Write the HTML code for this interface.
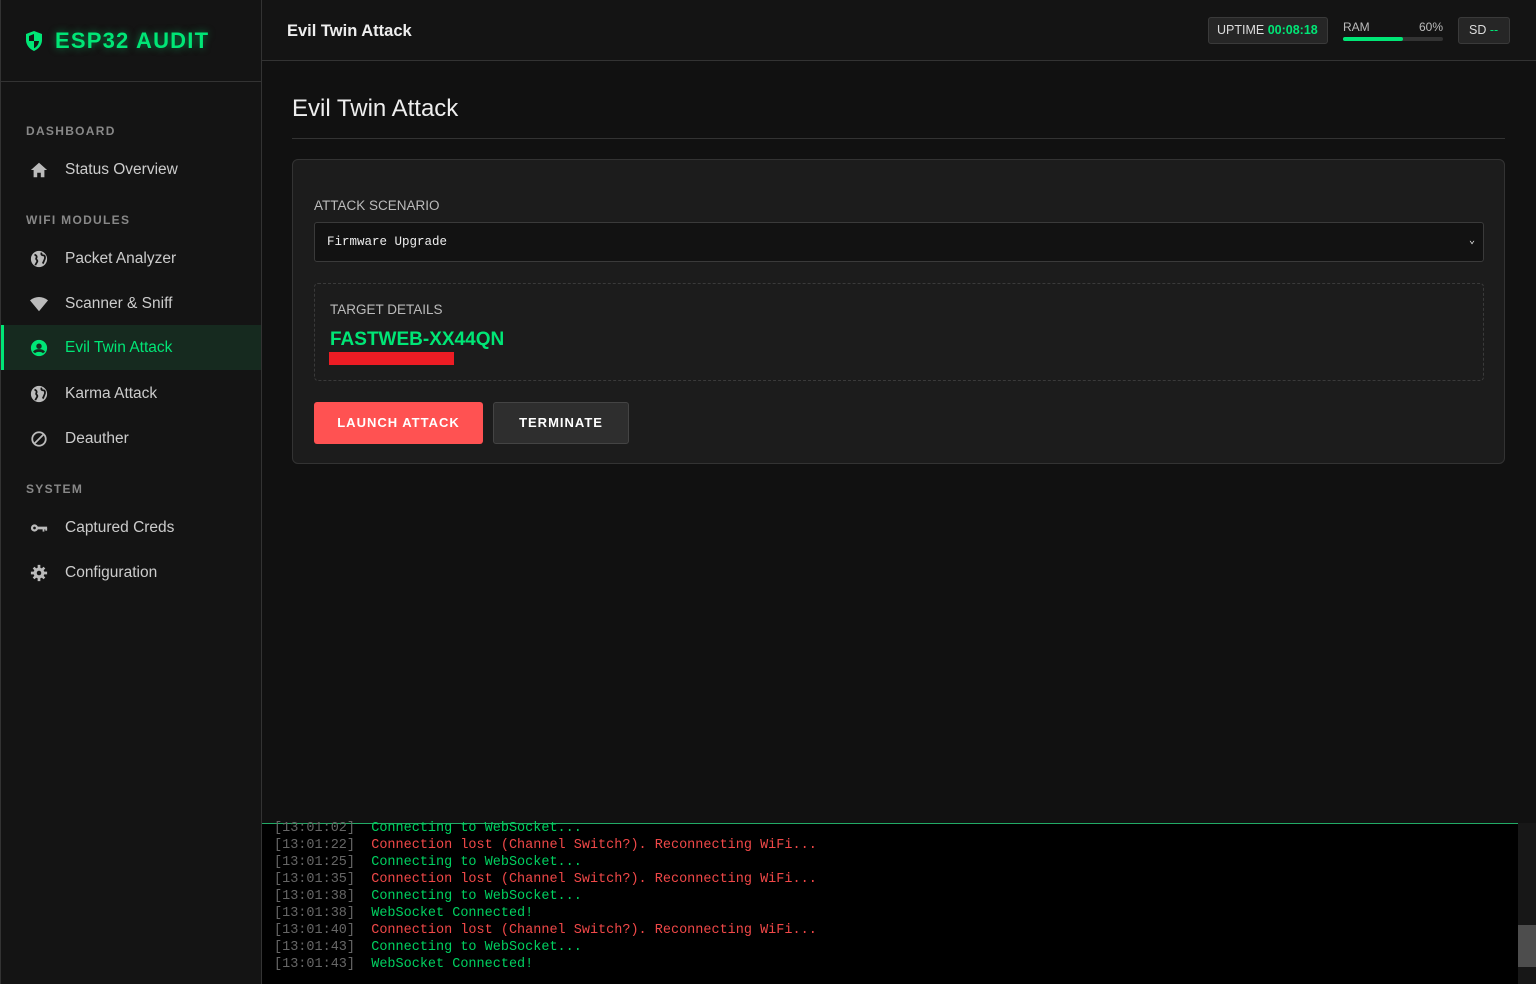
<!DOCTYPE html>
<html><head><style>
*{box-sizing:border-box;margin:0;padding:0}
body{width:1536px;height:984px;background:#111;font-family:"Liberation Sans",sans-serif;color:#ddd;position:relative;overflow:hidden}
.sb{position:absolute;left:0;top:0;width:262px;height:984px;background:#141414;border-right:1px solid #333;border-left:1px solid #333}
.logo{height:82px;border-bottom:1px solid #333;display:flex;align-items:center;padding-left:23px;color:#00e676;font-weight:bold;font-size:22px;letter-spacing:1.2px;text-shadow:0 0 8px rgba(0,230,118,.5)}
.logo svg{margin-right:11px}
.sec{position:absolute;font-size:12px;font-weight:bold;letter-spacing:1.3px;color:#888;left:25px;height:14px}
.it{position:absolute;left:0;width:260px;height:45px;display:flex;align-items:center;padding-left:29px;font-size:15.5px;color:#ccc}
.it svg{width:18px;height:18px;margin-right:17px;fill:#bbb}
.it.a{background:#162a1f;color:#00e676;border-left:3px solid #00e676;padding-left:26px}
.it.a svg{fill:#00e676}
.hd{position:absolute;left:262px;top:0;right:0;height:61px;border-bottom:1px solid #333;background:#141414}
.hd h1{position:absolute;left:25px;top:22px;font-size:16.5px;font-weight:bold;color:#eee}
.badge{position:absolute;top:17px;height:27px;background:#262626;border:1px solid #3a3a3a;border-radius:3px;font-size:12.5px;color:#ddd;line-height:25px;padding:0 10px;white-space:nowrap}
.g{color:#00e676;font-weight:bold}
.card{position:absolute;left:292px;top:159px;width:1213px;height:305px;background:#1c1c1c;border:1px solid #333;border-radius:6px}
.lbl{font-size:13.5px;color:#bbb}
.con{position:absolute;left:262px;top:823px;width:1256px;height:161px;background:#000;border-top:1px solid #2a6;font-family:"Liberation Mono",monospace;font-size:13.5px;line-height:17px;padding-left:12px}
.con div{white-space:pre}
.t{color:#666}.gr{color:#00d060}.rd{color:#f04848}
</style></head><body>
<div class="sb">
<div class="logo"><svg width="20" height="22" viewBox="0 0 20 22"><path d="M10 1L2 4v6c0 5 3.5 9 8 11 4.5-2 8-6 8-11V4z" fill="#00e676"/><path d="M10 4v7H5V6zM10 11h5c-.3 3.5-2.5 6-5 7.3z" fill="#141414"/></svg>ESP32 AUDIT</div>
<div class="sec" style="top:124px">DASHBOARD</div>
<div class="it" style="top:147px"><svg viewBox="0 0 20 20"><path d="M10 2L1 10h3v8h4v-5h4v5h4v-8h3z"/></svg>Status Overview</div>
<div class="sec" style="top:213px">WIFI MODULES</div>
<div class="it" style="top:236px"><svg viewBox="0 0 20 20"><circle cx="10" cy="10" r="9"/><path d="M5 5c2 1 3 2 2 4s2 2 1 4-2 3-2 4M13 3c-1 2 0 3 2 3s2 3 1 5-1 3-2 4" stroke="#141414" stroke-width="2" fill="none"/></svg>Packet Analyzer</div>
<div class="it" style="top:281px"><svg viewBox="0 0 20 20"><path d="M0 6c6-5 14-5 20 0l-10 12z"/></svg>Scanner &amp; Sniff</div>
<div class="it a" style="top:325px"><svg viewBox="0 0 20 20"><circle cx="10" cy="10" r="9"/><circle cx="10" cy="8" r="3" fill="#162a1f"/><path d="M4.5 15c2-3 9-3 11 0" stroke="#162a1f" stroke-width="3" fill="none"/></svg>Evil Twin Attack</div>
<div class="it" style="top:371px"><svg viewBox="0 0 20 20"><circle cx="10" cy="10" r="9"/><path d="M5 5c2 1 3 2 2 4s2 2 1 4-2 3-2 4M13 3c-1 2 0 3 2 3s2 3 1 5-1 3-2 4" stroke="#141414" stroke-width="2" fill="none"/></svg>Karma Attack</div>
<div class="it" style="top:416px"><svg viewBox="0 0 20 20"><circle cx="10" cy="10" r="7.5" fill="none" stroke="#bbb" stroke-width="2"/><path d="M5 15L15 5" stroke="#bbb" stroke-width="2"/></svg>Deauther</div>
<div class="sec" style="top:482px">SYSTEM</div>
<div class="it" style="top:505px"><svg viewBox="0 0 20 20"><circle cx="5" cy="10" r="4"/><rect x="8" y="8.5" width="11" height="3"/><rect x="14" y="10" width="2" height="4"/><rect x="17" y="10" width="2" height="3"/><circle cx="5" cy="10" r="1.5" fill="#141414"/></svg>Captured Creds</div>
<div class="it" style="top:550px"><svg viewBox="0 0 20 20"><circle cx="10" cy="10" r="6"/><path d="M8.5 1h3v4h-3zM8.5 15h3v4h-3zM1 8.5h4v3H1zM15 8.5h4v3h-4zM3 5l2-2 3 3-2 2zM12 14l2-2 3 3-2 2zM3 15l3-3 2 2-3 3zM12 6l3-3 2 2-3 3z"/><circle cx="10" cy="10" r="2.5" fill="#141414"/></svg>Configuration</div>
</div>
<div class="hd"><h1>Evil Twin Attack</h1>
<div class="badge" style="left:946px;width:120px;padding:0 8px">UPTIME <span class="g">00:08:18</span></div>
<div style="position:absolute;left:1081px;top:20px;width:100px;font-size:12px;color:#bbb">RAM<span style="float:right">60%</span></div>
<div style="position:absolute;left:1081px;top:37px;width:100px;height:4px;background:#333;border-radius:2px"><div style="width:60px;height:4px;background:#00e676;border-radius:2px"></div></div>
<div class="badge" style="left:1196px;width:52px">SD <span style="color:#00e676">--</span></div>
</div>
<div style="position:absolute;left:292px;top:95px;font-size:24px;color:#eee">Evil Twin Attack</div>
<div style="position:absolute;left:292px;top:138px;width:1213px;height:1px;background:#333"></div>
<div class="card">
<div class="lbl" style="position:absolute;left:21px;top:38px">ATTACK SCENARIO</div>
<div style="position:absolute;left:21px;top:62px;width:1170px;height:40px;background:#121212;border:1px solid #3a3a3a;border-radius:3px;font-family:'Liberation Mono',monospace;font-size:12.5px;color:#eee;line-height:38px;padding-left:12px">Firmware Upgrade<span style="position:absolute;right:8px;font-size:10px">&#8964;</span></div>
<div style="position:absolute;left:21px;top:123px;width:1170px;height:98px;border:1px dashed #3a3a3a;border-radius:4px">
<div class="lbl" style="position:absolute;left:15px;top:18px">TARGET DETAILS</div>
<div style="position:absolute;left:15px;top:45px;font-size:19px;font-weight:bold;color:#00e676">FASTWEB-XX44QN</div>
<div style="position:absolute;left:14px;top:68px;width:125px;height:13px;background:#ed1c24"></div>
</div>
<div style="position:absolute;left:21px;top:242px;width:169px;height:42px;background:#ff5252;border-radius:3px;color:#fff;font-weight:bold;font-size:13px;letter-spacing:1px;text-align:center;line-height:42px">LAUNCH ATTACK</div>
<div style="position:absolute;left:200px;top:242px;width:136px;height:42px;background:#2e2e2e;border:1px solid #444;border-radius:3px;color:#fff;font-weight:bold;font-size:13px;letter-spacing:1px;text-align:center;line-height:40px">TERMINATE</div>
</div>
<div class="con">
<div style="margin-top:-4px"><span class="t">[13:01:02]</span>  <span class="gr">Connecting to WebSocket...</span></div>
<div><span class="t">[13:01:22]</span>  <span class="rd">Connection lost (Channel Switch?). Reconnecting WiFi...</span></div>
<div><span class="t">[13:01:25]</span>  <span class="gr">Connecting to WebSocket...</span></div>
<div><span class="t">[13:01:35]</span>  <span class="rd">Connection lost (Channel Switch?). Reconnecting WiFi...</span></div>
<div><span class="t">[13:01:38]</span>  <span class="gr">Connecting to WebSocket...</span></div>
<div><span class="t">[13:01:38]</span>  <span class="gr">WebSocket Connected!</span></div>
<div><span class="t">[13:01:40]</span>  <span class="rd">Connection lost (Channel Switch?). Reconnecting WiFi...</span></div>
<div><span class="t">[13:01:43]</span>  <span class="gr">Connecting to WebSocket...</span></div>
<div><span class="t">[13:01:43]</span>  <span class="gr">WebSocket Connected!</span></div>
</div>
<div style="position:absolute;left:1518px;top:823px;width:18px;height:161px;background:#171717"><div style="position:absolute;top:102px;left:0;width:18px;height:42px;background:#4d4d4d"></div></div>
</body></html>
